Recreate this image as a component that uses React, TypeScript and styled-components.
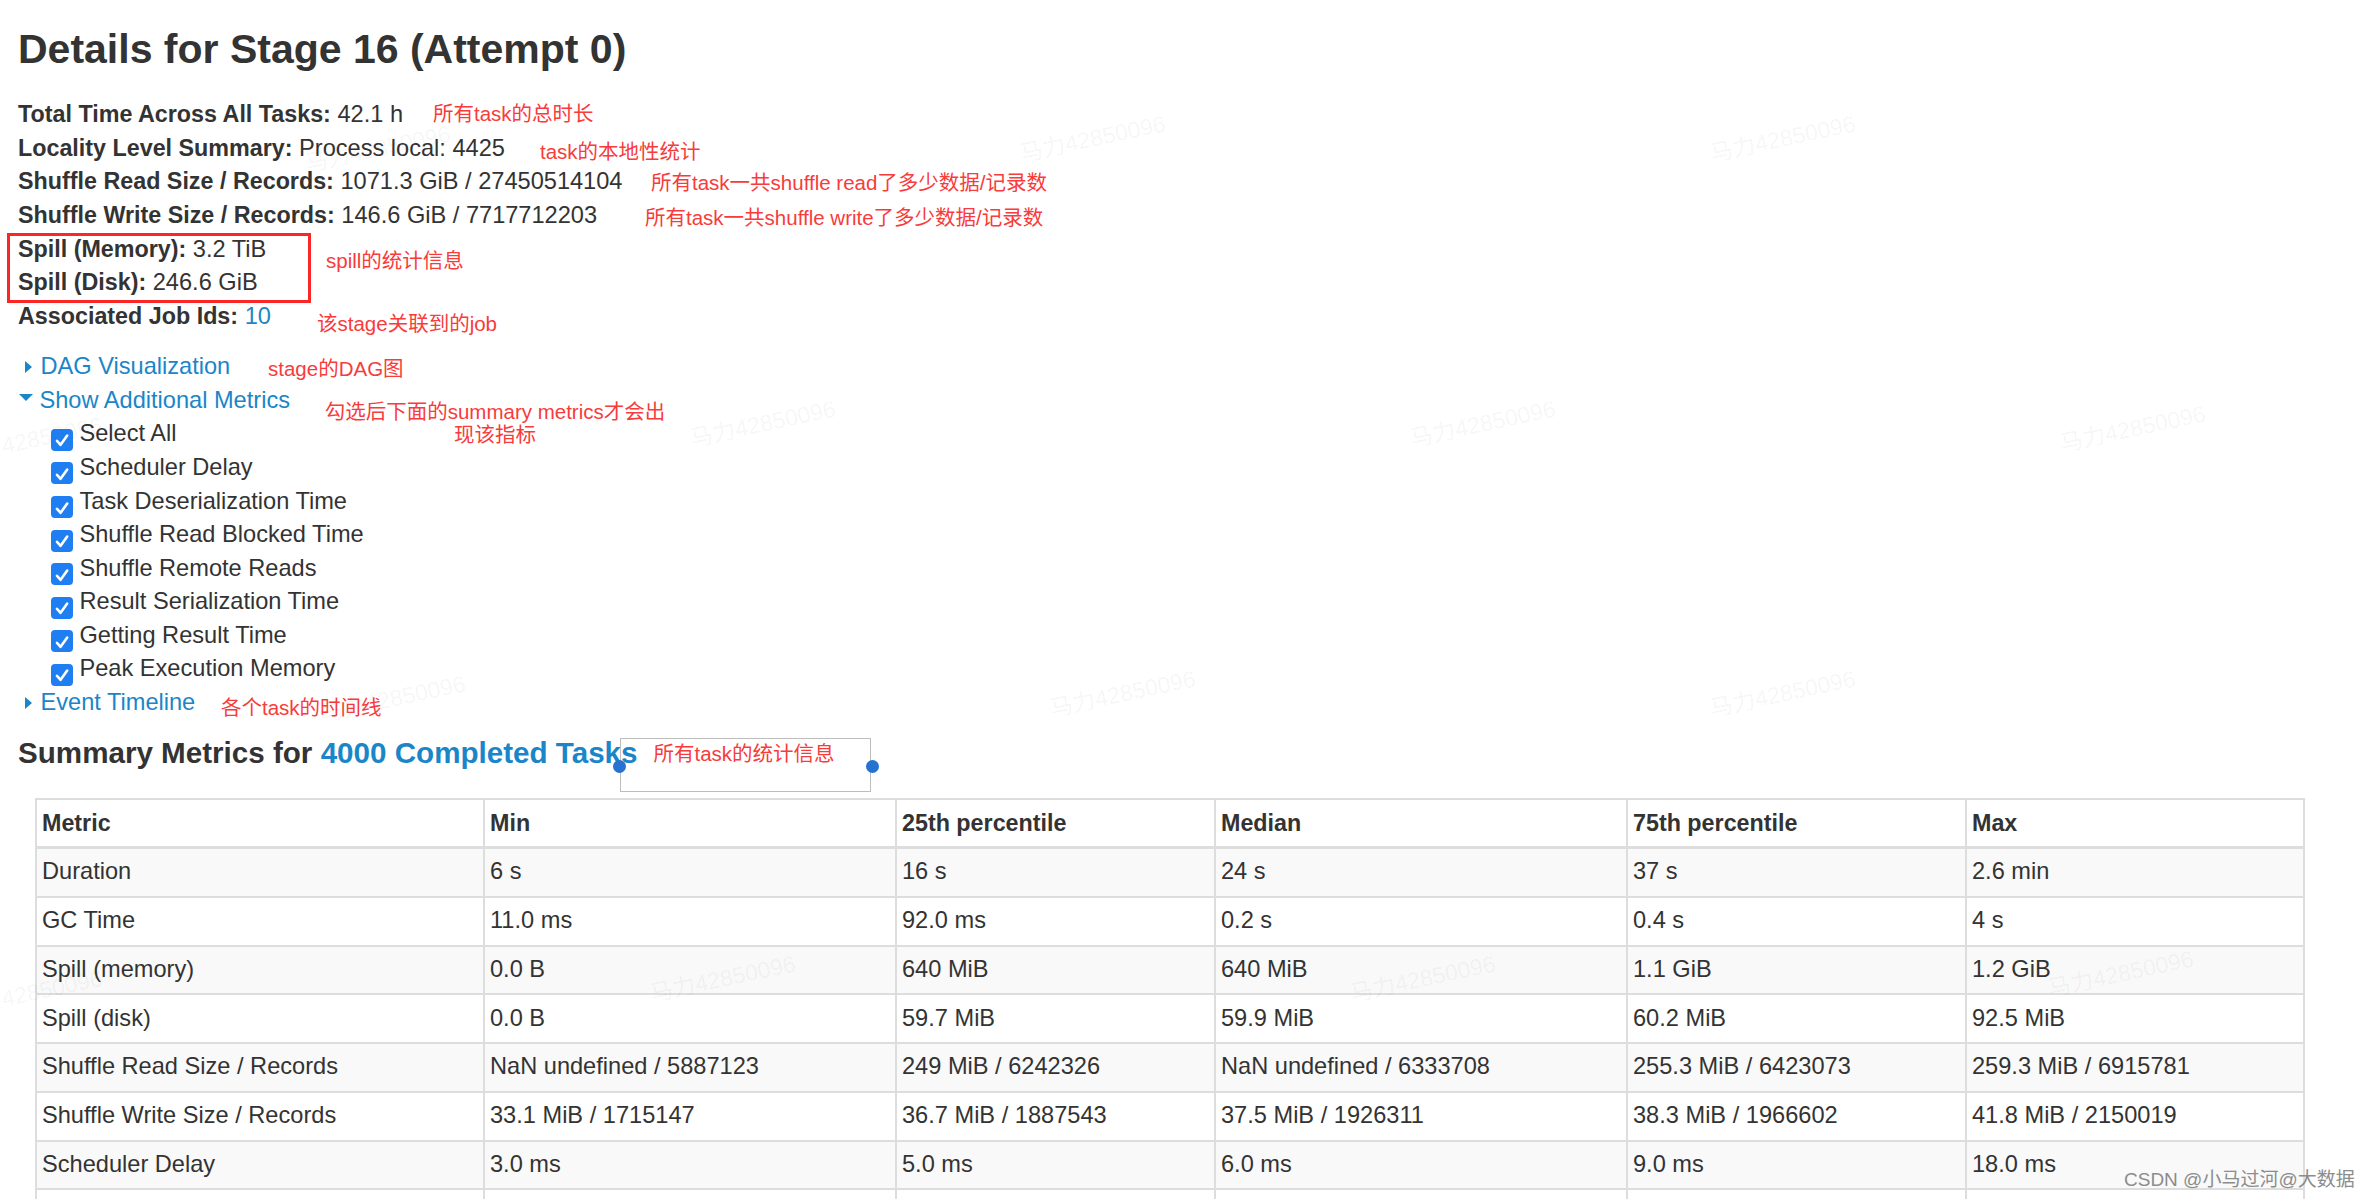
import React from "react";
import styled, { createGlobalStyle } from "styled-components";

const GlobalStyle = createGlobalStyle`
  html, body {
    margin: 0;
    padding: 0;
    background: #ffffff;
    overflow: hidden;
  }
  body {
    font-family: "Liberation Sans", Arial, "Noto Sans CJK SC", sans-serif;
    color: #333333;
  }
`;

const BLUE = "#1a86c8";
const RED = "#f83b3b";

const Page = styled.div`
  position: relative;
  width: 2368px;
  height: 1199px;
  overflow: hidden;
  box-sizing: border-box;
  padding: 26px 0 0 18px;
  font-size: 23.6px;
  line-height: 33.6px;
  color: #333333;
`;

const Title = styled.h3`
  margin: 0 0 26.2px;
  font-size: 41px;
  line-height: 46px;
  font-weight: 700;
  color: #333333;
  white-space: nowrap;
`;

const InfoList = styled.ul`
  list-style: none;
  margin: 0;
  padding: 0;
`;

const InfoItem = styled.li`
  white-space: nowrap;
`;

const Label = styled.strong`
  font-weight: 700;
  font-size: 23.3px;
`;

const Link = styled.a`
  color: ${BLUE};
  text-decoration: none;
`;

const SpillGroup = styled.div`
  position: relative;
  &::after {
    content: "";
    position: absolute;
    left: -11px;
    top: 0.5px;
    width: 304px;
    height: 70px;
    box-sizing: border-box;
    border: 3px solid #fb2626;
    pointer-events: none;
  }
`;

const Toggles = styled.div`
  margin-top: 16.8px;
`;

const ToggleRow = styled.div`
  display: flex;
  align-items: center;
  height: 33.6px;
  white-space: nowrap;
`;

const ArrowClosed = styled.span`
  width: 0;
  height: 0;
  border-top: 6px solid transparent;
  border-bottom: 6px solid transparent;
  border-left: 7px solid ${BLUE};
  margin-left: 7px;
  margin-right: 8.5px;
  flex-shrink: 0;
`;

const ArrowOpen = styled.span`
  width: 0;
  height: 0;
  border-left: 7.5px solid transparent;
  border-right: 7.5px solid transparent;
  border-top: 7.5px solid ${BLUE};
  margin-left: 1px;
  margin-right: 6.5px;
  margin-bottom: 6px;
  flex-shrink: 0;
`;

const CheckList = styled.div`
  padding-left: 33px;
`;

const CheckRow = styled.label`
  display: flex;
  align-items: flex-start;
  height: 33.6px;
  white-space: nowrap;
`;

const CheckBox = styled.span`
  width: 22px;
  height: 22px;
  margin-top: 11.5px;
  margin-right: 6.5px;
  border-radius: 4px;
  background: #1f7ff2;
  display: flex;
  align-items: center;
  justify-content: center;
  flex-shrink: 0;
`;

const Heading = styled.h4`
  margin: 16.3px 0 0;
  font-size: 29.6px;
  line-height: 34px;
  font-weight: 700;
  color: #333333;
  white-space: nowrap;
`;

const Table = styled.table`
  margin: 28px 0 0 17px;
  width: 2270px;
  table-layout: fixed;
  border-collapse: separate;
  border-spacing: 0;
  border-right: 2px solid #dddddd;
  font-size: 23.6px;
  line-height: 33.6px;
  color: #333333;

  tbody tr:first-child td {
    border-top-width: 3px;
  }
`;

const Col = styled.col<{ $w: number }>`
  width: ${(p) => p.$w}px;
`;

const HeadCell = styled.th`
  border-left: 2px solid #dddddd;
  border-top: 2px solid #dddddd;
  padding: 6.6px 5px 5.8px;
  text-align: left;
  font-weight: 700;
  font-size: 23.3px;
  white-space: nowrap;
  overflow: hidden;
`;

const Cell = styled.td`
  border-left: 2px solid #dddddd;
  border-top: 2px solid #dddddd;
  padding: 6.3px 5px 6.9px;
  height: 33.6px;
  text-align: left;
  white-space: nowrap;
  overflow: hidden;
`;

const Row = styled.tr<{ $striped: boolean }>`
  background: ${(p) => (p.$striped ? "#f9f9f9" : "#ffffff")};
`;

const Note = styled.div<{ $x: number; $y: number }>`
  position: absolute;
  left: ${(p) => p.$x}px;
  top: ${(p) => p.$y}px;
  font-family: "Liberation Sans", "Noto Sans CJK SC", sans-serif;
  font-size: 20.5px;
  line-height: 26px;
  color: ${RED};
  white-space: nowrap;
`;

const CenteredNote = styled(Note)`
  width: 360px;
  line-height: 23px;
  text-align: center;
`;

const CalloutBox = styled.div`
  position: absolute;
  left: 620px;
  top: 738px;
  width: 251px;
  height: 54px;
  box-sizing: border-box;
  border: 1.5px solid #bdbdbd;
  padding: 2px 0 0 32.5px;
  font-family: "Liberation Sans", "Noto Sans CJK SC", sans-serif;
  font-size: 20.5px;
  line-height: 26px;
  color: ${RED};
  white-space: nowrap;
`;

const Handle = styled.span<{ $side: "left" | "right" }>`
  position: absolute;
  top: 20.5px;
  ${(p) => (p.$side === "left" ? "left: -8px;" : "right: -9px;")}
  width: 13px;
  height: 13px;
  border-radius: 50%;
  background: #2672d0;
`;

const Watermark = styled.span<{ $x: number; $y: number }>`
  position: absolute;
  left: ${(p) => p.$x}px;
  top: ${(p) => p.$y}px;
  font-family: "Liberation Sans", "Noto Sans CJK SC", sans-serif;
  font-size: 23px;
  line-height: 28px;
  color: rgba(0, 0, 0, 0.05);
  transform: rotate(-12deg);
  transform-origin: left center;
  white-space: nowrap;
  pointer-events: none;
`;

const Signature = styled.div`
  position: absolute;
  left: 2124px;
  top: 1167px;
  font-family: "Liberation Sans", "Noto Sans CJK SC", sans-serif;
  font-size: 19px;
  line-height: 26px;
  color: #8c8c8c;
  white-space: nowrap;
  pointer-events: none;
`;

const Check = () => (
  <svg width="21" height="21" viewBox="0 0 21 21" aria-hidden="true">
    <path
      d="M5 11.8 L8.6 15.8 L15.2 6.6"
      fill="none"
      stroke="#ffffff"
      strokeWidth="2.6"
      strokeLinecap="round"
      strokeLinejoin="round"
    />
  </svg>
);

const metricsOptions = [
  "Select All",
  "Scheduler Delay",
  "Task Deserialization Time",
  "Shuffle Read Blocked Time",
  "Shuffle Remote Reads",
  "Result Serialization Time",
  "Getting Result Time",
  "Peak Execution Memory",
];

const columns: { title: string; w: number }[] = [
  { title: "Metric", w: 448 },
  { title: "Min", w: 412 },
  { title: "25th percentile", w: 319 },
  { title: "Median", w: 412 },
  { title: "75th percentile", w: 339 },
  { title: "Max", w: 338 },
];

const rows: string[][] = [
  ["Duration", "6 s", "16 s", "24 s", "37 s", "2.6 min"],
  ["GC Time", "11.0 ms", "92.0 ms", "0.2 s", "0.4 s", "4 s"],
  ["Spill (memory)", "0.0 B", "640 MiB", "640 MiB", "1.1 GiB", "1.2 GiB"],
  ["Spill (disk)", "0.0 B", "59.7 MiB", "59.9 MiB", "60.2 MiB", "92.5 MiB"],
  [
    "Shuffle Read Size / Records",
    "NaN undefined / 5887123",
    "249 MiB / 6242326",
    "NaN undefined / 6333708",
    "255.3 MiB / 6423073",
    "259.3 MiB / 6915781",
  ],
  [
    "Shuffle Write Size / Records",
    "33.1 MiB / 1715147",
    "36.7 MiB / 1887543",
    "37.5 MiB / 1926311",
    "38.3 MiB / 1966602",
    "41.8 MiB / 2150019",
  ],
  ["Scheduler Delay", "3.0 ms", "5.0 ms", "6.0 ms", "9.0 ms", "18.0 ms"],
  ["", "", "", "", "", ""],
];

const watermarks: { x: number; y: number; text: string }[] = [
  { x: 305, y: 150, text: "马力42850096" },
  { x: 1020, y: 140, text: "马力42850096" },
  { x: 1710, y: 140, text: "马力42850096" },
  { x: 2, y: 432, text: "42850096" },
  { x: 690, y: 425, text: "马力42850096" },
  { x: 1410, y: 425, text: "马力42850096" },
  { x: 2060, y: 430, text: "马力42850096" },
  { x: 320, y: 700, text: "马力42850096" },
  { x: 1050, y: 695, text: "马力42850096" },
  { x: 1710, y: 695, text: "马力42850096" },
  { x: 2, y: 985, text: "42850096" },
  { x: 650, y: 980, text: "马力42850096" },
  { x: 1350, y: 980, text: "马力42850096" },
  { x: 2048, y: 975, text: "马力42850096" },
];

export default function App() {
  return (
    <>
      <GlobalStyle />
      <Page>
        <Title>Details for Stage 16 (Attempt 0)</Title>
        <InfoList>
          <InfoItem>
            <Label>Total Time Across All Tasks:</Label> 42.1 h
          </InfoItem>
          <InfoItem>
            <Label>Locality Level Summary:</Label> Process local: 4425
          </InfoItem>
          <InfoItem>
            <Label>Shuffle Read Size / Records:</Label> 1071.3 GiB / 27450514104
          </InfoItem>
          <InfoItem>
            <Label>Shuffle Write Size / Records:</Label> 146.6 GiB / 7717712203
          </InfoItem>
          <SpillGroup>
            <InfoItem>
              <Label>Spill (Memory):</Label> 3.2 TiB
            </InfoItem>
            <InfoItem>
              <Label>Spill (Disk):</Label> 246.6 GiB
            </InfoItem>
          </SpillGroup>
          <InfoItem>
            <Label>Associated Job Ids:</Label> <Link href="#">10</Link>
          </InfoItem>
        </InfoList>

        <Toggles>
          <ToggleRow>
            <ArrowClosed />
            <Link href="#">DAG Visualization</Link>
          </ToggleRow>
          <ToggleRow>
            <ArrowOpen />
            <Link href="#">Show Additional Metrics</Link>
          </ToggleRow>
          <CheckList>
            {metricsOptions.map((m) => (
              <CheckRow key={m}>
                <CheckBox>
                  <Check />
                </CheckBox>
                {m}
              </CheckRow>
            ))}
          </CheckList>
          <ToggleRow>
            <ArrowClosed />
            <Link href="#">Event Timeline</Link>
          </ToggleRow>
        </Toggles>

        <Heading>
          Summary Metrics for <Link href="#">4000 Completed Tasks</Link>
        </Heading>

        <Table>
          <colgroup>
            {columns.map((c) => (
              <Col key={c.title} $w={c.w} />
            ))}
          </colgroup>
          <thead>
            <tr>
              {columns.map((c) => (
                <HeadCell key={c.title}>{c.title}</HeadCell>
              ))}
            </tr>
          </thead>
          <tbody>
            {rows.map((r, i) => (
              <Row key={i} $striped={i % 2 === 0}>
                {r.map((v, j) => (
                  <Cell key={j}>{v}</Cell>
                ))}
              </Row>
            ))}
          </tbody>
        </Table>

        <Note $x={433} $y={100.7}>所有task的总时长</Note>
        <Note $x={540} $y={138.7}>task的本地性统计</Note>
        <Note $x={651} $y={169.7}>所有task一共shuffle read了多少数据/记录数</Note>
        <Note $x={645} $y={204.7}>所有task一共shuffle write了多少数据/记录数</Note>
        <Note $x={326} $y={247.7}>spill的统计信息</Note>
        <Note $x={317} $y={310.7}>该stage关联到的job</Note>
        <Note $x={268} $y={355.7}>stage的DAG图</Note>
        <CenteredNote $x={315} $y={400.2}>
          勾选后下面的summary metrics才会出
          <br />
          现该指标
        </CenteredNote>
        <Note $x={221} $y={694.7}>各个task的时间线</Note>
        <CalloutBox>
          所有task的统计信息
          <Handle $side="left" />
          <Handle $side="right" />
        </CalloutBox>

        {watermarks.map((w, i) => (
          <Watermark key={i} $x={w.x} $y={w.y}>
            {w.text}
          </Watermark>
        ))}

        <Signature>CSDN @小马过河@大数据</Signature>
      </Page>
    </>
  );
}
